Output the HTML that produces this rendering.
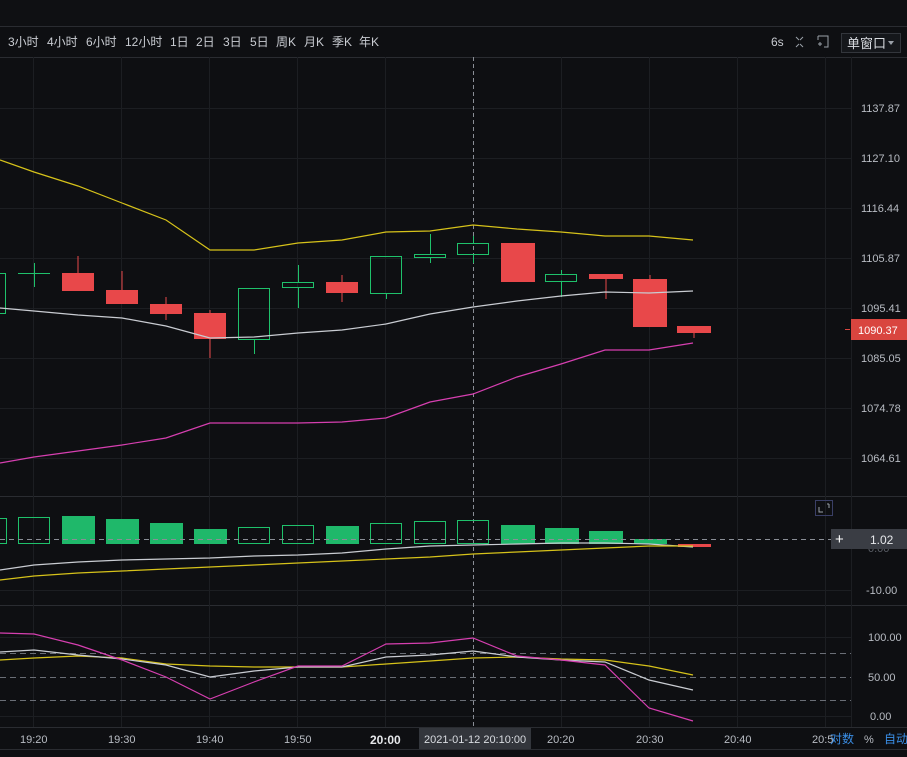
<!DOCTYPE html><html><head><meta charset="utf-8"><style>
body{margin:0;background:#0e0f12;width:907px;height:757px;overflow:hidden;font-family:"Liberation Sans","Noto Sans CJK SC",sans-serif}
svg{display:block}
text{font-family:"Liberation Sans","Noto Sans CJK SC",sans-serif}
</style></head><body>
<svg width="907" height="757" viewBox="0 0 907 757">
<rect width="907" height="757" fill="#0e0f12"/>
<rect width="907" height="26" fill="#0f1013"/>
<g stroke="#2a2c31" stroke-width="1">
<line x1="0" y1="26.5" x2="907" y2="26.5"/><line x1="0" y1="57.5" x2="907" y2="57.5"/>
<line x1="0" y1="496.5" x2="907" y2="496.5"/><line x1="0" y1="605.5" x2="907" y2="605.5"/>
<line x1="0" y1="727.5" x2="907" y2="727.5"/><line x1="0" y1="749.5" x2="907" y2="749.5"/>
</g>
<g stroke="#1c1e22" stroke-width="1">
<line x1="33.5" y1="57" x2="33.5" y2="727"/><line x1="121.5" y1="57" x2="121.5" y2="727"/><line x1="209.5" y1="57" x2="209.5" y2="727"/><line x1="297.5" y1="57" x2="297.5" y2="727"/><line x1="385.5" y1="57" x2="385.5" y2="727"/><line x1="561.5" y1="57" x2="561.5" y2="727"/><line x1="649.5" y1="57" x2="649.5" y2="727"/><line x1="737.5" y1="57" x2="737.5" y2="727"/><line x1="825.5" y1="57" x2="825.5" y2="727"/>
<line x1="0" y1="108.5" x2="851" y2="108.5"/><line x1="0" y1="158.5" x2="851" y2="158.5"/><line x1="0" y1="208.5" x2="851" y2="208.5"/><line x1="0" y1="258.5" x2="851" y2="258.5"/><line x1="0" y1="308.5" x2="851" y2="308.5"/><line x1="0" y1="358.5" x2="851" y2="358.5"/><line x1="0" y1="408.5" x2="851" y2="408.5"/><line x1="0" y1="458.5" x2="851" y2="458.5"/>
<line x1="0" y1="590.5" x2="851" y2="590.5"/><line x1="0" y1="637.5" x2="851" y2="637.5"/><line x1="0" y1="716.5" x2="851" y2="716.5"/>
<line x1="851.5" y1="57" x2="851.5" y2="727"/>
</g>
<g fill="#c9ccd2" font-size="12">
<text x="8" y="46">3小时</text><text x="47" y="46">4小时</text><text x="86" y="46">6小时</text><text x="125" y="46">12小时</text><text x="170" y="46">1日</text><text x="196" y="46">2日</text><text x="223" y="46">3日</text><text x="250" y="46">5日</text><text x="276" y="46">周K</text><text x="304" y="46">月K</text><text x="332" y="46">季K</text><text x="359" y="46">年K</text>
<text x="771" y="46">6s</text>
</g>
<g stroke="#9aa0a8" fill="none" stroke-width="1">
<path d="M796 37l3 3M803 37l-3 3M796 47l3-3M803 47l-3-3"/>
<path d="M818 36h10v11h-4M818 36v4M818 44h4M820 42v4"/>
</g>
<rect x="841.5" y="33.5" width="59" height="19" fill="#15171b" stroke="#33363c"/>
<text x="847" y="48" fill="#d9dce1" font-size="13">单窗口</text>
<path d="M888 41h6l-3 4z" fill="#9aa0a8"/>
<g fill="#b8bcc3" font-size="11">
<text x="861" y="112">1137.87</text><text x="861" y="162">1127.10</text><text x="861" y="212">1116.44</text><text x="861" y="262">1105.87</text><text x="861" y="312">1095.41</text><text x="861" y="362">1085.05</text><text x="861" y="412">1074.78</text><text x="861" y="462">1064.61</text>
<text x="866" y="594">-10.00</text><text x="868" y="641">100.00</text><text x="868" y="681">50.00</text><text x="870" y="720">0.00</text>
</g>
<line x1="473.5" y1="57" x2="473.5" y2="727" stroke="#8a8e96" stroke-dasharray="4,3"/>
<!-- candles -->
<g stroke="#1fc16b" fill="none" stroke-width="1">
<rect x="-10.5" y="273.5" width="16" height="40"/>
<path d="M34.5 263v24M18 273.5h32"/>
<rect x="238.5" y="288.5" width="31" height="51"/><path d="M254.5 339v15"/>
<rect x="282.5" y="282.5" width="31" height="5"/><path d="M298.5 265v17M298.5 287v21"/>
<rect x="370.5" y="256.5" width="31" height="37"/><path d="M386.5 293v6"/>
<rect x="414.5" y="254.5" width="31" height="3"/><path d="M430.5 234v20M430.5 257v6"/>
<rect x="457.5" y="243.5" width="31" height="11"/><path d="M473.5 236v7M473.5 254v9"/>
<rect x="545.5" y="274.5" width="31" height="7"/><path d="M561.5 270v4M561.5 281v16"/>
</g>
<g fill="#e8484a">
<rect x="62" y="273" width="32" height="18"/><rect x="77.5" y="256" width="1" height="34"/>
<rect x="106" y="290" width="32" height="14"/><rect x="121.5" y="271" width="1" height="33"/>
<rect x="150" y="304" width="32" height="10"/><rect x="165.5" y="297" width="1" height="23"/>
<rect x="194" y="313" width="32" height="26"/><rect x="209.5" y="310" width="1" height="48"/>
<rect x="326" y="282" width="32" height="11"/><rect x="341.5" y="275" width="1" height="27"/>
<rect x="501" y="243" width="34" height="39"/>
<rect x="589" y="274" width="34" height="5"/><rect x="605.5" y="274" width="1" height="25"/>
<rect x="633" y="279" width="34" height="48"/><rect x="649.5" y="275" width="1" height="4"/>
<rect x="677" y="326" width="34" height="7"/><rect x="693.5" y="326" width="1" height="12"/>
</g>
<g fill="none" stroke-width="1.2">
<polyline stroke="#d6c21a" points="0,160 34,172 78,186 122,203 166,220 210,250 254,250 298,243 342,240 386,232 430,231 473,225 517,229 561,232 605,236 649,236 693,240"/>
<polyline stroke="#c9ccd2" points="0,308 34,311 78,315 122,318 166,326 210,338 254,337 298,333 342,330 386,324 430,314 473,307 517,301 561,296 605,292 649,293 693,291"/>
<polyline stroke="#d63fb0" points="0,463 34,457 78,451 122,445 166,438 210,423 254,423 298,423 342,422 386,418 430,402 473,394 517,377 561,364 605,350 649,350 693,343"/>
</g>
<rect x="851" y="319" width="56" height="21" fill="#d9453f"/>
<text x="858" y="334" fill="#fff" font-size="11">1090.37</text>
<rect x="845" y="329" width="5" height="1" fill="#d9453f"/>
<!-- macd -->
<rect x="815.5" y="500.5" width="17" height="15" fill="none" stroke="#3a3f66"/>
<path d="M819 507v5h4M829 504h-2M829 504v4" stroke="#9aa0a8" fill="none"/>
<g stroke="#1fc16b" fill="none">
<rect x="-10.5" y="518.5" width="17" height="25"/><rect x="18.5" y="517.5" width="31" height="26"/>
<rect x="238.5" y="527.5" width="31" height="16"/><rect x="282.5" y="525.5" width="31" height="18"/>
<rect x="370.5" y="523.5" width="31" height="20"/><rect x="414.5" y="521.5" width="31" height="22"/><rect x="457.5" y="520.5" width="31" height="23"/>
</g>
<g fill="#1fb86a">
<rect x="62" y="516" width="33" height="28"/><rect x="106" y="519" width="33" height="25"/><rect x="150" y="523" width="33" height="21"/><rect x="194" y="529" width="33" height="15"/><rect x="326" y="526" width="33" height="18"/>
<rect x="501" y="525" width="34" height="19"/><rect x="545" y="528" width="34" height="16"/><rect x="589" y="531" width="34" height="13"/><rect x="634" y="539" width="33" height="5"/>
</g>
<rect x="678" y="544" width="33" height="3" fill="#e8484a"/>
<line x1="0" y1="539.5" x2="831" y2="539.5" stroke="#8a8e96" stroke-dasharray="5,4"/>
<g fill="none" stroke-width="1.2">
<polyline stroke="#c9ccd2" points="0,570 34,565 78,562 122,560 166,559 210,558 254,556 298,555 342,553 386,549 430,546 473,545 517,544 561,543 605,543 649,544 693,547"/>
<polyline stroke="#d6c21a" points="0,580 34,576 78,573 122,571 166,569 210,567 254,565 298,563 342,561 386,559 430,557 473,554 517,552 561,550 605,548 649,546 693,546"/>
</g>
<text x="868" y="552" fill="#5a5e66" font-size="11">0.00</text>
<rect x="831" y="529" width="76" height="20" fill="#3a3d44"/>
<text x="835" y="544" fill="#fff" font-size="15">+</text>
<text x="870" y="544" fill="#e6e8eb" font-size="12">1.02</text>
<!-- kdj -->
<g stroke="#6a6e76" stroke-dasharray="6,4"><line x1="0" y1="653.5" x2="851" y2="653.5"/><line x1="0" y1="677.5" x2="851" y2="677.5"/><line x1="0" y1="700.5" x2="851" y2="700.5"/></g>
<g fill="none" stroke-width="1.2">
<polyline stroke="#d6c21a" points="0,660 34,658 78,656 122,658 166,664 210,666 254,667 298,667 342,667 386,664 430,661 473,658 517,657 561,659 605,660 649,666 693,675"/>
<polyline stroke="#c9ccd2" points="0,652 34,650 78,655 122,659 166,665 210,677 254,671 298,667 342,667 386,657 430,655 473,651 517,657 561,660 605,662 649,680 693,690"/>
<polyline stroke="#d63fb0" points="0,633 34,634 78,645 122,660 166,677 210,699 254,682 298,666 342,666 386,644 430,643 473,638 517,656 561,660 605,665 649,708 693,721"/>
</g>
<!-- time axis -->
<g fill="#b8bcc3" font-size="11">
<text x="20" y="743">19:20</text><text x="108" y="743">19:30</text><text x="196" y="743">19:40</text><text x="284" y="743">19:50</text>
<text x="370" y="744" font-weight="bold" font-size="12" fill="#e6e8eb">20:00</text>
<text x="547" y="743">20:20</text><text x="636" y="743">20:30</text><text x="724" y="743">20:40</text><text x="812" y="743">20:5</text>
<text x="864" y="743">%</text>
</g>
<rect x="419" y="728" width="112" height="21" fill="#33363c"/>
<text x="424" y="743" fill="#d9dce1" font-size="11">2021-01-12 20:10:00</text>
<text x="830" y="743" fill="#3a8ee6" font-size="12">对数</text>
<text x="884" y="743" fill="#3a8ee6" font-size="12">自动</text>
</svg>
</body></html>
